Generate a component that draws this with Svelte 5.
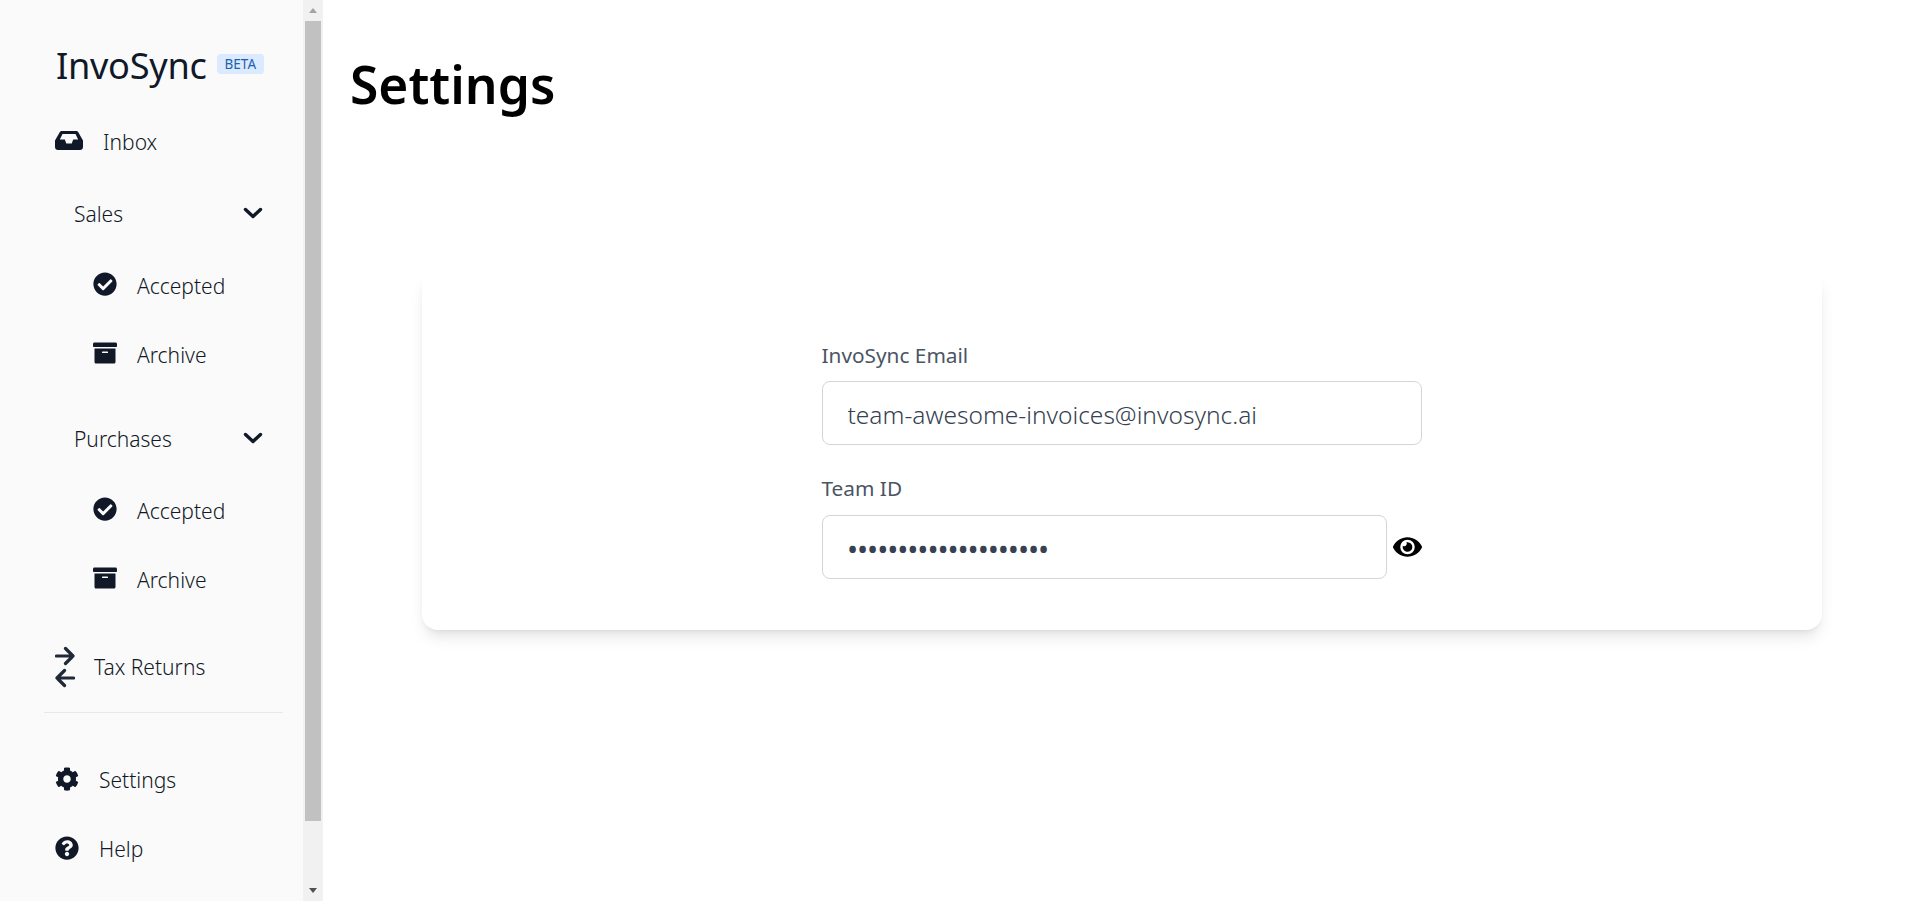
<script>
  const check = 'M504 256c0 136.967-111.033 248-248 248S8 392.967 8 256 119.033 8 256 8s248 111.033 248 248zM227.314 387.314l184-184c6.248-6.248 6.248-16.379 0-22.627l-22.627-22.627c-6.248-6.249-16.379-6.25-22.628 0L216 308.118l-70.059-70.059c-6.248-6.248-16.379-6.248-22.628 0l-22.627 22.627c-6.248 6.248-6.248 16.379 0 22.627l104 104c6.249 6.249 16.379 6.249 22.628.001z';
  const box = 'M32 448c0 17.7 14.3 32 32 32h384c17.7 0 32-14.3 32-32V160H32v288zm160-212c0-6.600 5.400-12 12-12h104c6.600 0 12 5.400 12 12v8c0 6.600-5.400 12-12 12H204c-6.600 0-12-5.400-12-12v-8zM480 32H32C14.300 32 0 46.300 0 64v48c0 8.800 7.200 16 16 16h480c8.800 0 16-7.200 16-16V64c0-17.700-14.300-32-32-32z';
  const gear = 'M487.4 315.7l-42.6-24.6c4.3-23.2 4.3-47 0-70.2l42.6-24.6c4.9-2.8 7.100-8.600 5.500-14-11.100-35.600-30-67.800-54.700-94.600-3.800-4.100-10-5.100-14.800-2.300L380.800 110c-17.900-15.400-38.500-27.300-60.800-35.100V25.800c0-5.600-3.900-10.500-9.400-11.700-36.700-8.200-74.300-7.800-109.200 0-5.500 1.200-9.400 6.100-9.400 11.700V75c-22.200 7.900-42.800 19.800-60.800 35.100L88.700 85.500c-4.900-2.800-11-1.900-14.800 2.300-24.700 26.700-43.600 58.900-54.700 94.600-1.700 5.400.6 11.200 5.500 14L67.300 221c-4.300 23.200-4.300 47 0 70.200l-42.600 24.600c-4.900 2.800-7.100 8.600-5.500 14 11.100 35.600 30 67.800 54.700 94.600 3.800 4.100 10 5.100 14.800 2.300l42.600-24.600c17.900 15.400 38.500 27.300 60.800 35.100v49.200c0 5.600 3.900 10.500 9.400 11.700 36.700 8.200 74.300 7.800 109.200 0 5.500-1.200 9.400-6.100 9.400-11.700v-49.200c22.200-7.900 42.800-19.800 60.800-35.100l42.600 24.600c4.900 2.800 11 1.900 14.800-2.300 24.700-26.700 43.600-58.900 54.700-94.600 1.500-5.500-.8-11.300-5.700-14.100zM256 336c-44.100 0-80-35.900-80-80s35.900-80 80-80 80 35.900 80 80-35.900 80-80 80z';
  const help = 'M504 256c0 136.997-111.043 248-248 248S8 392.997 8 256C8 119.083 119.043 8 256 8s248 111.083 248 248zM262.655 90c-54.497 0-89.255 22.957-116.549 63.758-3.536 5.286-2.353 12.415 2.715 16.258l34.699 26.31c5.205 3.947 12.621 3.008 16.665-2.122 17.864-22.658 30.113-35.797 57.303-35.797 20.429 0 45.698 13.148 45.698 32.958 0 14.976-12.363 22.667-32.534 33.976C247.128 238.528 216 254.941 216 296v4c0 6.627 5.373 12 12 12h56c6.627 0 12-5.373 12-12v-1.333c0-28.462 83.186-29.647 83.186-106.667 0-58.002-60.165-102-116.531-102zM256 338c-25.365 0-46 20.635-46 46 0 25.364 20.635 46 46 46s46-20.636 46-46c0-25.365-20.635-46-46-46z';
  const eye = 'M572.52 241.4C518.29 135.59 410.93 64 288 64S57.680 135.640 3.480 241.410a32.350 32.350 0 0 0 0 29.190C57.710 376.410 165.070 448 288 448s230.320-71.640 284.520-177.410a32.350 32.350 0 0 0 0-29.190zM288 400a144 144 0 1 1 144-144 143.930 143.930 0 0 1-144 144zm0-240a95.310 95.310 0 0 0-25.310 3.790 47.850 47.850 0 0 1-66.900 66.900A95.780 95.780 0 1 0 288 160z';

  const groups = ['Sales', 'Purchases'];
</script>

<div class="page">
  <aside class="sidebar">
    <div class="logo">
      <span class="brand">InvoSync</span>
      <span class="badge">BETA</span>
    </div>

    <div class="row inbox">
      <svg class="ico-inbox" viewBox="0 0 28 19" aria-hidden="true">
        <path fill="#111827" fill-rule="evenodd" d="M7 0h14c1 0 1.800.5 2.300 1.300L28 9.500V16c0 1.700-1.300 3-3 3H3c-1.700 0-3-1.300-3-3V9.500L4.700 1.300C5.200.5 6 0 7 0zM7.500 3 4.800 8.500h5l1.500 4h5.400l1.500-4h5L20.500 3z"/>
      </svg>
      <span>Inbox</span>
    </div>

    {#each groups as name, i}
      <div class="row group" class:first={i === 0}>
        <span>{name}</span>
        <svg class="chevron" viewBox="0 0 20 12" aria-hidden="true">
          <path d="M2.500 2.500 10 9.500l7.500-7" fill="none" stroke="#111827" stroke-width="3.400" stroke-linecap="round" stroke-linejoin="round"/>
        </svg>
      </div>
      <div class="row sub">
        <svg class="ico" viewBox="0 0 512 512" aria-hidden="true"><path fill="#111827" d={check}/></svg>
        <span>Accepted</span>
      </div>
      <div class="row sub archive">
        <svg class="ico" viewBox="0 0 512 512" aria-hidden="true"><path fill="#111827" d={box}/></svg>
        <span>Archive</span>
      </div>
    {/each}

    <div class="row tax">
      <svg class="ico-tax" viewBox="0 0 20 42" aria-hidden="true">
        <path d="M1.500 10h16.500M10.500 2.500l7.500 7.500-7.500 7.500M18.500 32H2M9.500 24.500 2 32l7.500 7.500" fill="none" stroke="#1f2937" stroke-width="3.200" stroke-linecap="round" stroke-linejoin="round"/>
      </svg>
      <span>Tax Returns</span>
    </div>

    <hr class="divider" />

    <div class="row bottom">
      <svg class="ico lower" viewBox="0 0 512 512" aria-hidden="true"><path fill="#111827" d={gear}/></svg>
      <span>Settings</span>
    </div>
    <div class="row bottom help">
      <svg class="ico lower" viewBox="0 0 512 512" aria-hidden="true"><path fill="#111827" d={help}/></svg>
      <span>Help</span>
    </div>
  </aside>

  <div class="scrollbar">
    <div class="arrow up"></div>
    <div class="thumb"></div>
    <div class="arrow down"></div>
  </div>

  <main class="main">
    <h1>Settings</h1>
    <section class="card">
      <form class="form">
        <label for="email">InvoSync Email</label>
        <input id="email" type="text" value="team-awesome-invoices@invosync.ai" readonly />
        <label class="second" for="team">Team ID</label>
        <div class="secret">
          <input id="team" type="password" value="12345678901234567890" readonly />
          <svg class="eye" viewBox="0 0 576 512" aria-hidden="true"><path d={eye}/></svg>
        </div>
      </form>
    </section>
  </main>
</div>

<style>
  :global(body) {
    margin: 0;
    background: #fff;
    font-family: 'Noto Sans', 'Open Sans', sans-serif;
  }

  .page {
    display: flex;
    height: 901px;
    overflow: hidden;
  }

  .sidebar {
    width: 303px;
    flex-shrink: 0;
    box-sizing: border-box;
    padding-top: 41px;
    background: #fafafa;
    color: #111827;
    font-size: 21px;
    font-weight: 350;
  }

  .logo {
    display: flex;
    align-items: center;
    height: 48px;
    padding-left: 56px;
    gap: 10px;
  }

  .brand {
    font-size: 36.200px;
    letter-spacing: -0.3px;
    font-weight: 400;
  }

  .badge {
    display: inline-block;
    margin-top: -3px;
    padding: 0 8px;
    height: 20px;
    line-height: 21px;
    background: #dbeafe;
    border-radius: 4px;
    color: #1e5fae;
    font-size: 13.500px;
    font-weight: 400;
  }

  .row {
    display: flex;
    align-items: center;
    height: 48px;
    box-sizing: border-box;
  }

  .ico {
    width: 24px;
    height: 24px;
    flex-shrink: 0;
    margin-top: -4px;
  }
  .ico.lower {
    margin-top: -3px;
  }

  .inbox {
    margin-top: 29px;
    padding-left: 55px;
    gap: 20px;
  }

  .ico-inbox {
    width: 28px;
    height: 19px;
    margin-top: -3px;
  }

  .group {
    margin-top: 36px;
    padding: 0 40px 0 74px;
    justify-content: space-between;
  }
  .group.first {
    margin-top: 24px;
  }

  .chevron {
    width: 20px;
    height: 12px;
    margin-top: -3px;
  }

  .sub {
    margin-top: 24px;
    padding-left: 93px;
    gap: 20px;
  }
  .sub.archive {
    margin-top: 21px;
  }

  .tax {
    margin-top: 39px;
    padding-left: 55px;
    gap: 19px;
  }

  .ico-tax {
    width: 20px;
    height: 42px;
    flex-shrink: 0;
  }

  .divider {
    margin: 21px 20px 0 44px;
    border: none;
    border-top: 1px solid #e8e8e8;
  }

  .bottom {
    margin-top: 43px;
    padding-left: 55px;
    gap: 20px;
  }
  .bottom.help {
    margin-top: 21px;
  }

  .scrollbar {
    width: 20px;
    flex-shrink: 0;
    display: flex;
    flex-direction: column;
    background: #f1f1f1;
  }

  .arrow {
    height: 21px;
    flex-shrink: 0;
    display: flex;
    align-items: center;
    justify-content: center;
  }
  .arrow::before {
    content: '';
    border-left: 4.500px solid transparent;
    border-right: 4.500px solid transparent;
  }
  .up::before {
    border-bottom: 5px solid #a3a3a3;
  }
  .down::before {
    border-top: 5px solid #505050;
  }

  .thumb {
    height: 800px;
    margin: 0 2px 0 2px;
    background: #c1c1c1;
  }
  .down {
    margin-top: auto;
  }

  .main {
    flex: 1;
    min-width: 0;
  }

  h1 {
    margin: 41px 0 0 27px;
    font-size: 51.500px;
    line-height: 86px;
    font-weight: 560;
    color: #000;
  }

  .card {
    display: flex;
    justify-content: center;
    height: 360px;
    box-sizing: border-box;
    margin: 143px 97px 0 99px;
    padding: 70px 1px 0 0;
    background: #fff;
    border-radius: 16px;
    box-shadow: 0 10px 15px -3px rgba(0, 0, 0, 0.1), 0 4px 6px -4px rgba(0, 0, 0, 0.1);
  }

  .form {
    display: flex;
    flex-direction: column;
    width: 600px;
  }

  label {
    height: 30px;
    line-height: 30px;
    margin-bottom: 11px;
    color: #4b5563;
    font-size: 20.800px;
    font-weight: 450;
  }
  label.second {
    margin: 28px 0 12px;
  }

  input {
    display: block;
    width: 100%;
    height: 64px;
    box-sizing: border-box;
    padding: 2px 25px 0;
    border: 1px solid #d1d5db;
    border-radius: 8px;
    background: #fff;
    color: #374151;
    font-family: inherit;
    font-size: 24.500px;
    font-weight: 350;
    outline: none;
  }

  .secret {
    display: flex;
    align-items: center;
    gap: 6px;
  }
  .secret input {
    flex: 1;
    min-width: 0;
    padding-top: 3px;
    font-size: 27px;
    font-weight: 500;
    letter-spacing: -0.1px;
  }

  .eye {
    width: 29px;
    height: 26px;
    flex-shrink: 0;
  }
</style>
